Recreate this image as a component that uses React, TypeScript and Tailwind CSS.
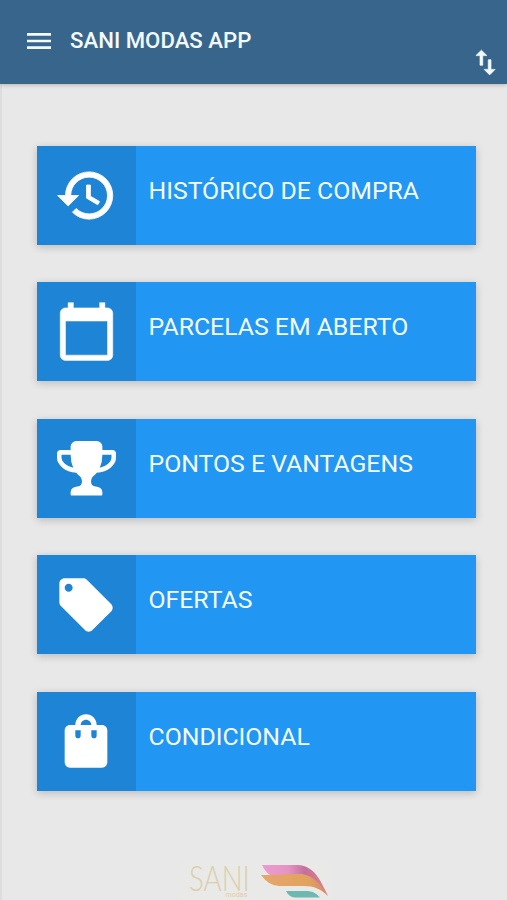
import {
  MdCalendarToday,
  MdHistory,
  MdLocalOffer,
  MdMenu,
  MdShoppingBag,
  MdSwapVert,
} from "react-icons/md";

const Trophy = () => (
  <svg viewBox="0 -102 1664 1536" className="h-[54.5px] w-[59px] fill-current">
    <path d="M458 653q-74-162-74-371h-256v96q0 78 94.5 162t235.5 113zm1078-275v-96h-256q0 209-74 371 141-29 235.5-113t94.5-162zm128-128v128q0 71-41.5 143t-112 130-173 97.5-215.5 44.5q-42 54-95 95-38 34-52.5 72.5t-14.5 89.5q0 54 30.5 91t97.5 37q75 0 133.5 45.5t58.5 114.5v64q0 14-9 23t-23 9h-832q-14 0-23-9t-9-23v-64q0-69 58.5-114.5t133.5-45.5q67 0 97.5-37t30.5-91q0-51-14.5-89.5t-52.5-72.5q-53-41-95-95-113-5-215.5-44.5t-173-97.5-112-130-41.5-143v-128q0-40 28-68t68-28h288v-96q0-66 47-113t113-47h576q66 0 113 47t47 113v96h288q40 0 68 28t28 68z" />
  </svg>
);

const items = [
  {
    label: "HISTÓRICO DE COMPRA",
    icon: <MdHistory size={63} className="[&>path:last-child]:stroke-[0.3]" />,
  },
  {
    label: "PARCELAS EM ABERTO",
    icon: <MdCalendarToday size={63} className="[&>path:last-child]:stroke-[0.2]" />,
  },
  { label: "PONTOS E VANTAGENS", icon: <Trophy /> },
  { label: "OFERTAS", icon: <MdLocalOffer size={64} /> },
  { label: "CONDICIONAL", icon: <MdShoppingBag size={64} /> },
];

const Logo = () => (
  <div className="flex h-[38px] w-[150px] items-start bg-[#e9e9e8] pl-[8px]">
    <div className="w-[60px] text-[#d9cfab]">
      <p className="w-[70px] origin-left scale-x-[0.79] font-['Lato','Liberation_Sans',sans-serif] text-[35px] leading-[30px] font-light">
        SANI
      </p>
      <p className="pr-[2px] text-right text-[7px] leading-[6px]">modas</p>
    </div>
    <svg viewBox="0 0 70 36" className="ml-[11px] h-[36px] w-[70px]">
      <defs>
        <linearGradient id="pink">
          <stop offset="0" stopColor="#ee9bd0" />
          <stop offset="0.4" stopColor="#e394c4" />
          <stop offset="0.65" stopColor="#c4709c" />
          <stop offset="1" stopColor="#df8380" />
        </linearGradient>
        <linearGradient id="orange">
          <stop offset="0" stopColor="#e7a66c" />
          <stop offset="0.7" stopColor="#e2a35e" />
          <stop offset="1" stopColor="#d5876b" />
        </linearGradient>
      </defs>
      <path d="M2 3H38C54 4 60 17 68 34L50 15H14Q6 12 2 3Z" fill="url(#pink)" />
      <path d="M1 13H20L26 12H42C54 14 60 22 68 34C61 27 54 24 44 24H19Q9 24 1 13Z" fill="url(#orange)" />
      <path d="M26 29H46C52 29 56 31 60 35.500H35Q29 35 26 29Z" fill="#6cb9b1" />
    </svg>
  </div>
);

const App = () => {
  return (
    <div className="flex h-[900px] w-full flex-col overflow-hidden bg-[#e8e8e8] font-['Roboto','Liberation_Sans',sans-serif]">
      <header className="z-10 flex h-[84px] shrink-0 justify-between bg-[#38658c] pr-[5px] pl-[23px] text-[#f2faff] shadow-[0_1px_4px_rgba(80,60,60,0.3)]">
        <div className="flex h-[81px] items-center gap-[15px]">
          <MdMenu size={32} />
          <h1 className="pt-px text-[22.2px] font-medium">SANI MODAS APP</h1>
        </div>
        <MdSwapVert size={33} className="mt-[46px] [&>path:last-child]:stroke-[0.5]" />
      </header>
      <main className="flex flex-1 flex-col items-center border-l-2 border-[#dedddd] pt-[62px] pr-[31px] pl-[35px]">
        <div className="flex w-full flex-col gap-[37.4px]">
          {items.map((item) => (
            <button
              key={item.label}
              className="flex h-[99px] w-full bg-[#2196f3] text-left text-[#f4fcff] shadow-[0_2px_8px_rgba(0,0,0,0.2)]"
            >
              <span className="flex h-full w-[99px] items-center justify-center bg-[#1e84d6] pr-px text-white">
                {item.icon}
              </span>
              <span className="pt-[27px] pl-[12.5px] text-[24.8px] leading-[36px]">{item.label}</span>
            </button>
          ))}
        </div>
        <div className="mt-[71px] mr-px">
          <Logo />
        </div>
      </main>
    </div>
  );
};

export default App;
